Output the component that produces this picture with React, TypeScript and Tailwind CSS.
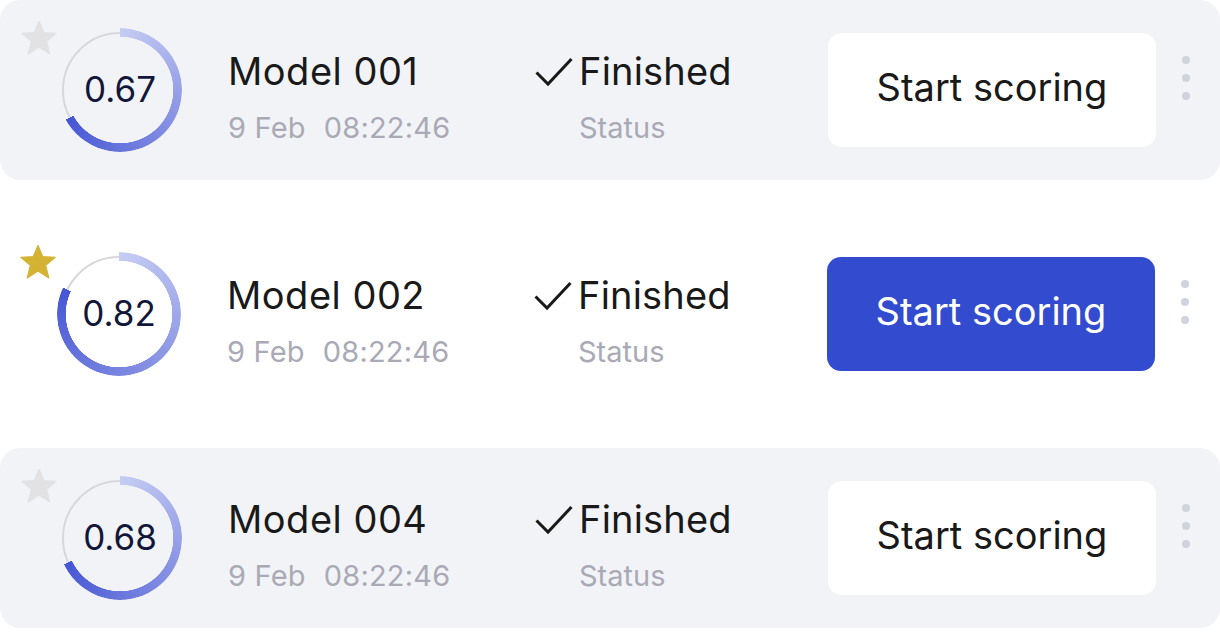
import { CSSProperties } from "react";

type Model = {
  name: string;
  score: number;
  starred: boolean;
  active: boolean;
};

const MODELS: Model[] = [
  { name: "Model 001", score: 0.67, starred: false, active: false },
  { name: "Model 002", score: 0.82, starred: true, active: true },
  { name: "Model 004", score: 0.68, starred: false, active: false },
];

function Star({ gold }: { gold: boolean }) {
  return (
    <svg width="36" height="34" viewBox="0 0 24 23" className="absolute -left-[37px] -top-[7px]">
      <polygon
        points="12,0.3 15.2,7.8 23.6,8.4 17.2,13.8 19.3,22.3 12,17.6 4.7,22.3 6.8,13.8 0.4,8.4 8.8,7.8"
        fill={gold ? "#d4b334" : "#e2e2e4"}
        stroke={gold ? "#d4b334" : "#e2e2e4"}
        strokeWidth="0.8"
        strokeLinejoin="round"
      />
    </svg>
  );
}

function ScoreRing({ score, starred }: { score: number; starred: boolean }) {
  const deg = score * 360;
  const ringStyle: CSSProperties = {
    background: `conic-gradient(from 0deg, #c6cdf3 0deg, #4656d4 ${deg}deg, transparent ${deg}deg)`,
    WebkitMask: "radial-gradient(farthest-side, transparent calc(100% - 9px), #000 calc(100% - 8.5px))",
    mask: "radial-gradient(farthest-side, transparent calc(100% - 9px), #000 calc(100% - 8.5px))",
  };

  return (
    <div className="relative h-[124px] w-[124px] shrink-0">
      <div className="absolute inset-[4px] rounded-full border-2 border-[#d8d8dc]" />
      <div className="absolute inset-0 rounded-full" style={ringStyle} />
      <Star gold={starred} />
      <div className="absolute inset-0 flex items-center justify-center pb-[2px] text-[35px] text-[#12173a]">
        {score.toFixed(2)}
      </div>
    </div>
  );
}

function Row({ model }: { model: Model }) {
  return (
    <div
      className={
        model.active
          ? "flex h-[180px] items-center rounded-[20px] bg-white pl-[57px] pr-[30px]"
          : "flex h-[180px] items-center rounded-[20px] bg-[#f2f3f7] pl-[58px] pr-[30px]"
      }
    >
      <ScoreRing score={model.score} starred={model.starred} />

      {/* name + date */}
      <div className="ml-[46px] mt-[14px] flex w-[307px] flex-col gap-[16px]">
        <div className="text-[38px] leading-[46px] tracking-[0.5px] text-[#191919]">{model.name}</div>
        <div className="flex gap-[18px] text-[29px] leading-[36px] tracking-[0.2px] text-[#a9aab6]">
          <span>9 Feb</span>
          <span>08:22:46</span>
        </div>
      </div>

      {/* status */}
      <div className="mt-[14px] flex w-[293px] flex-col gap-[16px]">
        <div className="flex items-center text-[38px] leading-[46px] tracking-[0.2px] text-[#191919]">
          <svg width="38" height="30" viewBox="0 0 38 30" className="mr-[6px] mt-[2px]">
            <polyline points="1.5,15.5 13,27 36.5,2" fill="none" stroke="#191919" strokeWidth="3" />
          </svg>
          Finished
        </div>
        <div className="pl-[44px] text-[29px] leading-[36px] text-[#a9aab6]">Status</div>
      </div>

      <button
        className={
          model.active
            ? "h-[114px] w-[328px] rounded-[14px] bg-[#334bcf] pb-[6px] text-[38px] text-white"
            : "h-[114px] w-[328px] rounded-[14px] bg-white pb-[6px] text-[38px] text-[#191919]"
        }
      >
        Start scoring
      </button>

      <div className="mb-[24px] ml-[26px] flex flex-col gap-[10px]">
        <span className="h-[8px] w-[8px] rounded-full bg-[#d0d2dd]" />
        <span className="h-[8px] w-[8px] rounded-full bg-[#d0d2dd]" />
        <span className="h-[8px] w-[8px] rounded-full bg-[#d0d2dd]" />
      </div>
    </div>
  );
}

export default function App() {
  return (
    <div className="h-[636px] w-[1220px] bg-white" style={{ fontFamily: "Inter, 'Noto Sans', sans-serif" }}>
      <div className="flex flex-col gap-[44px]">
        {MODELS.map((m) => (
          <Row key={m.name} model={m} />
        ))}
      </div>
    </div>
  );
}
